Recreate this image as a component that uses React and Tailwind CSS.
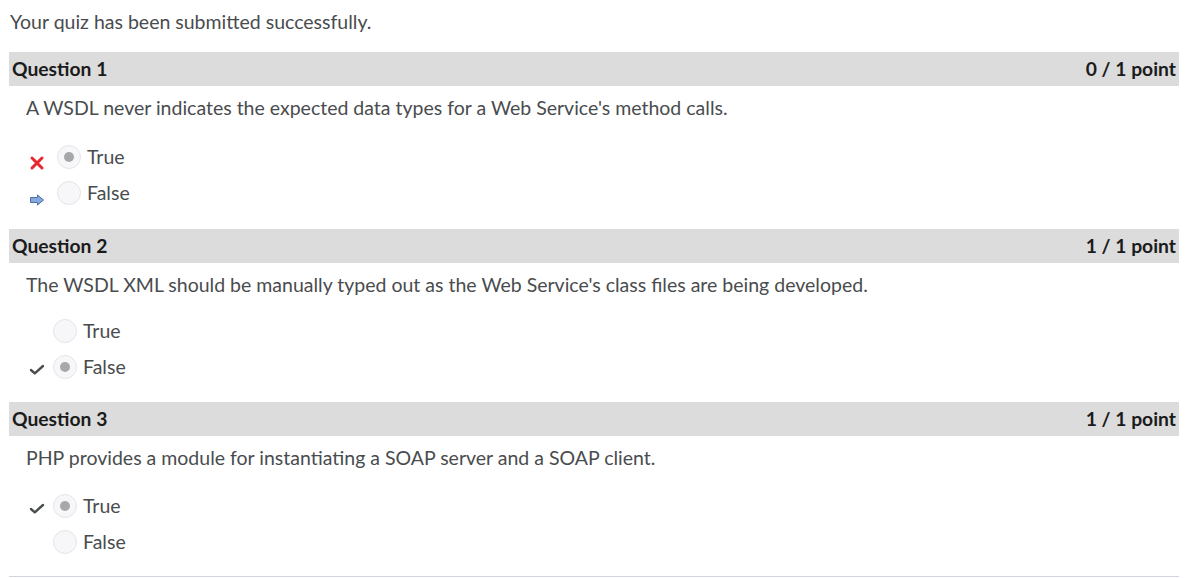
import React from 'react';

const questions = [
  {
    title: 'Question 1',
    score: '0 / 1 point',
    text: "A WSDL never indicates the expected data types for a Web Service's method calls.",
    answersTop: 'mt-[19px]',
    gap: 'gap-[12px]',
    after: 'mb-[18px]',
    answers: [
      { label: 'True', checked: true, mark: 'wrong' },
      { label: 'False', checked: false, mark: 'arrow' },
    ],
  },
  {
    title: 'Question 2',
    score: '1 / 1 point',
    text: "The WSDL XML should be manually typed out as the Web Service's class files are being developed.",
    answersTop: 'mt-[16px]',
    gap: 'gap-[8px]',
    after: 'mb-[17px]',
    answers: [
      { label: 'True', checked: false },
      { label: 'False', checked: true, mark: 'check' },
    ],
  },
  {
    title: 'Question 3',
    score: '1 / 1 point',
    text: 'PHP provides a module for instantiating a SOAP server and a SOAP client.',
    answersTop: 'mt-[18px]',
    gap: 'gap-[8px]',
    after: 'mb-[16px]',
    answers: [
      { label: 'True', checked: true, mark: 'check' },
      { label: 'False', checked: false },
    ],
  },
];

function Mark({ type }) {
  if (type === 'wrong') {
    return (
      <svg width="16" height="16" viewBox="0 0 16 16" className="mt-[11px]">
        <path d="M3 3 L13 13 M13 3 L3 13" stroke="#e8262f" strokeWidth="3" strokeLinecap="round" />
      </svg>
    );
  }
  if (type === 'arrow') {
    return (
      <svg width="16" height="16" viewBox="0 0 16 16" className="mt-[13px]">
        <path d="M1.5 5.5 H8.5 V3 L14.5 8 L8.5 13 V10.5 H1.5 Z" fill="#86a8da" stroke="#4a6ea8" strokeWidth="1" strokeLinejoin="round" />
      </svg>
    );
  }
  if (type === 'check') {
    return (
      <svg width="16" height="16" viewBox="0 0 16 16" className="mt-[3px]">
        <path d="M2 9 L5.8 12.3 L14 5" fill="none" stroke="#494c4e" strokeWidth="2.4" strokeLinecap="round" strokeLinejoin="round" />
      </svg>
    );
  }
  return <span className="w-[16px] h-[16px]" />;
}

function Radio({ checked }) {
  return (
    <span className="w-[24px] h-[24px] rounded-full border border-[#e3e5ea] bg-[#f7f7f9] flex items-center justify-center shrink-0">
      {checked && <span className="w-[10px] h-[10px] rounded-full bg-[#a7a8aa]" />}
    </span>
  );
}

export default function App() {
  return (
    <div className="bg-white min-h-[578px] pl-[9px] pr-[25px] text-[19.5px] text-[#494c4e]" style={{ fontFamily: 'Lato, "Noto Sans", sans-serif' }}>
      <p className="pt-[10px] pl-px leading-[24px] mb-[18px]">Your quiz has been submitted successfully.</p>

      {questions.map((q) => (
        <div key={q.title}>
          {/* Header bar */}
          <div className="h-[34px] bg-[#dcdcdc] flex items-center justify-between px-[3px] font-bold text-[#1b1b1b] text-[19.3px]">
            <span>{q.title}</span>
            <span>{q.score}</span>
          </div>
          <p className="mt-[10px] pl-[17px] leading-[24px]">{q.text}</p>
          <div className={`${q.answersTop} ${q.after}`}>
            {q.answers.map((a) => (
              <div key={a.label} className={`h-[36px] flex items-center pl-[20px] ${q.gap}`}>
                <Mark type={a.mark} />
                <div className="flex items-center gap-[6px]">
                  <Radio checked={a.checked} />
                  <span className="leading-[24px] -mt-[1px]">{a.label}</span>
                </div>
              </div>
            ))}
          </div>
        </div>
      ))}

      <div className="border-t border-[#cfd4e0]" />
    </div>
  );
}
